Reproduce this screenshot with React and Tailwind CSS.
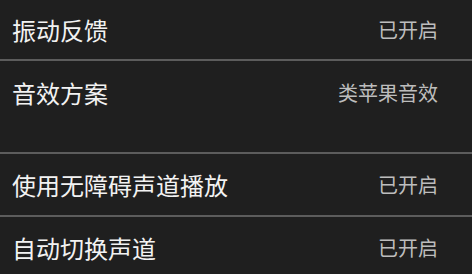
import React from 'react';

const rows = [
  { label: '振动反馈', value: '已开启', h: 'h-[59px]' },
  { label: '音效方案', value: '类苹果音效', h: 'h-[64px]', spacer: true },
  { label: '使用无障碍声道播放', value: '已开启', h: 'h-[61px]' },
  { label: '自动切换声道', value: '已开启', h: 'h-[62px]' },
];

const App = () => {
  return (
    <div
      className="w-[472px] h-[274px] overflow-hidden bg-[#1f1f1f]"
      style={{ fontFamily: '"Noto Sans CJK SC", "Noto Sans", sans-serif' }}
    >
      {rows.map((row, i) => (
        <React.Fragment key={i}>
          {i > 0 && !rows[i - 1].spacer && <div className="h-[2px] bg-[#5c5c5c]" />}
          <div className={`${row.h} flex items-center justify-between pl-3 pr-[34px]`}>
            <span className="text-[24px] leading-none text-[#f2f2f2]">{row.label}</span>
            <span className="text-[20px] leading-none text-[#bdbdbd]">{row.value}</span>
          </div>
          {row.spacer && (
            <>
              <div className="h-[27px]" />
              <div className="h-[2px] bg-[#5c5c5c]" />
            </>
          )}
        </React.Fragment>
      ))}
    </div>
  );
};

export default App;
